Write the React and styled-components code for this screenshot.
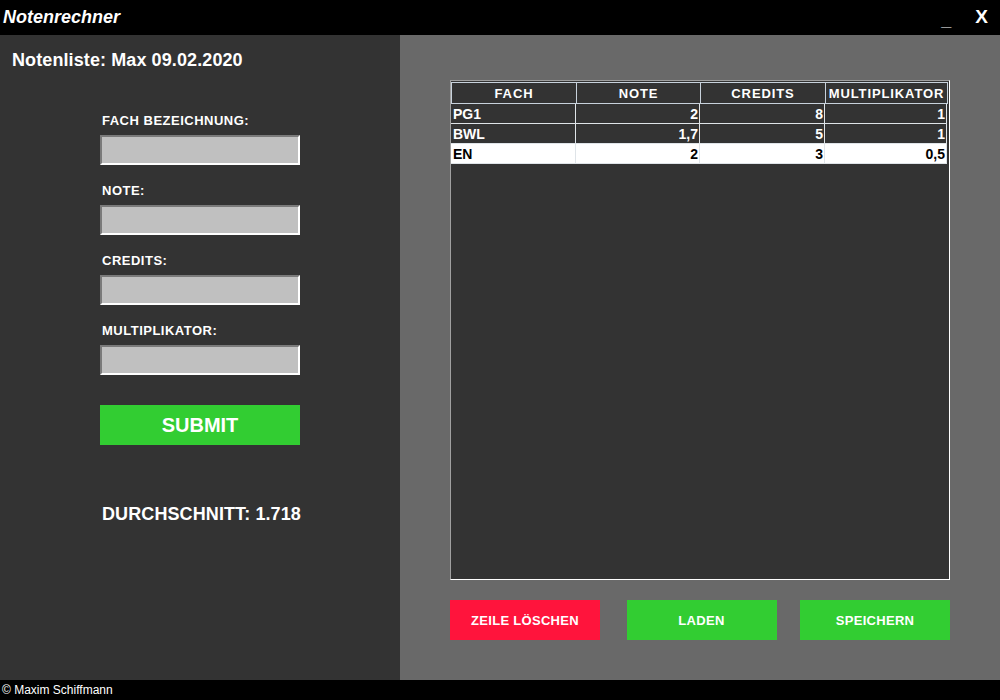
import React from "react";
import styled, { createGlobalStyle } from "styled-components";

const GlobalStyle = createGlobalStyle`
  html, body {
    margin: 0;
    padding: 0;
    background: #000;
  }
  * {
    box-sizing: border-box;
  }
`;

const fields = ["FACH BEZEICHNUNG:", "NOTE:", "CREDITS:", "MULTIPLIKATOR:"];

const columns = ["FACH", "NOTE", "CREDITS", "MULTIPLIKATOR"];

const rows = [
  { fach: "PG1", note: "2", credits: "8", multi: "1" },
  { fach: "BWL", note: "1,7", credits: "5", multi: "1" },
  { fach: "EN", note: "2", credits: "3", multi: "0,5", selected: true }
];

const App = () => {
  return (
    <Window>
      <GlobalStyle />
      <TitleBar>
        <Title>Notenrechner</Title>
        <WindowControls>
          <Minimize>_</Minimize>
          <Close>X</Close>
        </WindowControls>
      </TitleBar>
      <Main>
        <LeftPanel>
          <Heading>Notenliste: Max 09.02.2020</Heading>
          <Form>
            {fields.map(field => (
              <Field key={field}>
                <Label>{field}</Label>
                <Input type="text" />
              </Field>
            ))}
            <SubmitButton>SUBMIT</SubmitButton>
            <Average>DURCHSCHNITT: 1.718</Average>
          </Form>
        </LeftPanel>
        <RightPanel>
          <Table>
            <HeaderRow>
              {columns.map(col => (
                <HeaderCell key={col}>{col}</HeaderCell>
              ))}
            </HeaderRow>
            {rows.map(row => (
              <Row key={row.fach} selected={row.selected}>
                <Cell>{row.fach}</Cell>
                <Cell right>{row.note}</Cell>
                <Cell right>{row.credits}</Cell>
                <Cell right>{row.multi}</Cell>
              </Row>
            ))}
          </Table>
          <Actions>
            <ActionButton color="#ff143c">ZEILE LÖSCHEN</ActionButton>
            <ActionButton color="#32cd32" shift={3}>LADEN</ActionButton>
            <ActionButton color="#32cd32">SPEICHERN</ActionButton>
          </Actions>
        </RightPanel>
      </Main>
      <Footer>© Maxim Schiffmann</Footer>
    </Window>
  );
};

export default App;

const Window = styled.div`
  width: 1000px;
  height: 700px;
  display: flex;
  flex-direction: column;
  font-family: "Liberation Sans", Arial, sans-serif;
  color: #fff;
  background: #000;
`;

const TitleBar = styled.div`
  height: 35px;
  flex-shrink: 0;
  display: flex;
  align-items: center;
  justify-content: space-between;
  padding: 0 12px 0 3px;
  background: #000;
`;

const Title = styled.div`
  font-size: 18px;
  font-weight: bold;
  font-style: italic;
  margin-top: -1px;
`;

const WindowControls = styled.div`
  display: flex;
  align-items: center;
  gap: 24px;
`;

const Minimize = styled.span`
  font-size: 18px;
  font-weight: bold;
  margin-top: 6px;
`;

const Close = styled.span`
  font-size: 19px;
  font-weight: bold;
  margin-top: -1px;
`;

const Main = styled.div`
  flex: 1;
  display: flex;
`;

const LeftPanel = styled.div`
  width: 400px;
  background: #333333;
  padding: 15px 0 0 12px;
`;

const Heading = styled.div`
  font-size: 18px;
  font-weight: bold;
  line-height: 20px;
  letter-spacing: 0.1px;
`;

const Form = styled.div`
  width: 200px;
  margin: 43px 0 0 88px;
  display: flex;
  flex-direction: column;
`;

const Field = styled.div`
  display: flex;
  flex-direction: column;
  margin-bottom: 18px;
`;

const Label = styled.div`
  font-size: 13px;
  font-weight: bold;
  line-height: 15px;
  letter-spacing: 0.5px;
  padding-left: 2px;
  margin-bottom: 7px;
`;

const Input = styled.input`
  width: 200px;
  height: 30px;
  margin: 0;
  padding: 2px 4px;
  background: #c0c0c0;
  border-style: solid;
  border-width: 2px;
  border-color: #7a7a7a #ffffff #ffffff #7a7a7a;
  font-family: inherit;
  font-size: 13px;
  outline: none;
`;

const SubmitButton = styled.button`
  width: 200px;
  height: 40px;
  margin-top: 12px;
  border: none;
  background: #32cd32;
  color: #fff;
  font-family: inherit;
  font-size: 20px;
  font-weight: bold;
  cursor: pointer;
`;

const Average = styled.div`
  margin-top: 59px;
  padding-left: 2px;
  font-size: 18px;
  font-weight: bold;
  line-height: 20px;
  letter-spacing: 0.1px;
  white-space: nowrap;
`;

const RightPanel = styled.div`
  flex: 1;
  background: #696969;
  padding: 45px 50px 0 50px;
  display: flex;
  flex-direction: column;
`;

const Table = styled.div`
  height: 500px;
  background: #333333;
  border-style: solid;
  border-width: 1px;
  border-color: #a0a0a0 #ffffff #ffffff #a0a0a0;
  padding: 1px 2px 0 0;
  display: flex;
  flex-direction: column;
`;

const HeaderRow = styled.div`
  display: grid;
  grid-template-columns: 125px 124px 125px 1fr;
  height: 22px;
`;

const HeaderCell = styled.div`
  border: 1px solid #c8d2dc;
  margin-right: -1px;
  display: flex;
  align-items: center;
  justify-content: center;
  font-size: 13px;
  font-weight: bold;
  letter-spacing: 0.9px;
  color: #fff;
`;

const Row = styled.div`
  display: grid;
  grid-template-columns: 125px 124px 125px 1fr;
  height: 20px;
  background: ${props => (props.selected ? "#ffffff" : "#333333")};
  color: ${props => (props.selected ? "#000" : "#fff")};
  border-bottom: 1px solid #dfe4e8;
`;

const Cell = styled.div`
  display: flex;
  align-items: center;
  justify-content: ${props => (props.right ? "flex-end" : "flex-start")};
  padding: 0 1px 0 2px;
  border-right: 1px solid #dfe4e8;
  font-size: 14px;
  font-weight: bold;
`;

const Actions = styled.div`
  margin-top: 20px;
  display: flex;
  justify-content: space-between;
`;

const ActionButton = styled.button`
  width: 150px;
  height: 40px;
  border: none;
  margin-left: ${props => props.shift || 0}px;
  background: ${props => props.color};
  color: #fff;
  font-family: inherit;
  font-size: 13px;
  font-weight: bold;
  letter-spacing: 0.3px;
  cursor: pointer;
`;

const Footer = styled.div`
  height: 20px;
  flex-shrink: 0;
  background: #000;
  padding-left: 2px;
  font-size: 12px;
  line-height: 20px;
`;
